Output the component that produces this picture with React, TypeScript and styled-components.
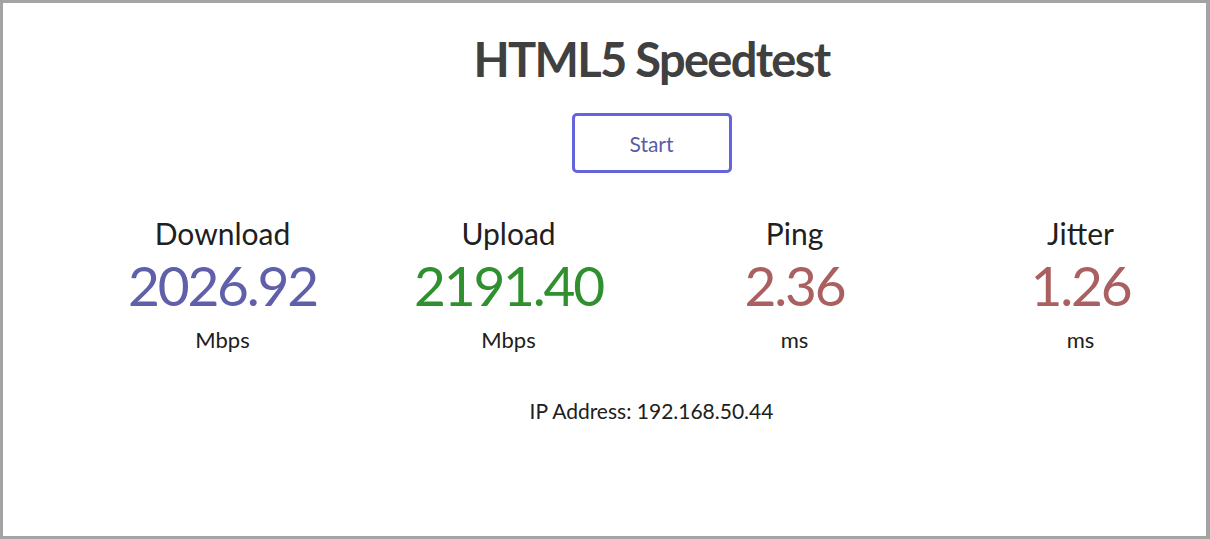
import React from "react";
import styled, { createGlobalStyle } from "styled-components";

const Global = createGlobalStyle`
  html, body { margin: 0; padding: 0; background: #ffffff; }
  body { font-family: "Lato", "Open Sans", sans-serif; }
`;

const Frame = styled.div`
  box-sizing: border-box;
  width: 1210px;
  height: 539px;
  border: 3px solid #a3a3a3;
  border-right-width: 4px;
  background: #ffffff;
  overflow: hidden;
`;

const Content = styled.main`
  display: flex;
  flex-direction: column;
  align-items: center;
  padding-left: 94px;
  text-align: center;
`;

const Title = styled.h1`
  margin: 26px 0 0;
  font-size: 47px;
  line-height: 60px;
  font-weight: 700;
  letter-spacing: -1.7px;
  color: #404040;
`;

const StartButton = styled.button`
  box-sizing: border-box;
  margin-top: 24px;
  width: 160px;
  height: 60px;
  border: 3px solid #6464dc;
  border-radius: 5px;
  background: #ffffff;
  color: #5c5ca6;
  font-family: "Lato", "Open Sans", sans-serif;
  font-size: 21px;
  cursor: pointer;
`;

const Meters = styled.div`
  display: grid;
  grid-template-columns: repeat(4, 200px);
  column-gap: 86px;
  margin-top: 42px;
`;

const Meter = styled.div`
  display: flex;
  flex-direction: column;
  align-items: center;
`;

const TestName = styled.div`
  font-size: 30px;
  line-height: 36px;
  color: #202020;
`;

const MeterValue = styled.div<{ $color: string }>`
  margin-top: 4px;
  font-size: 55px;
  line-height: 60px;
  letter-spacing: -2.2px;
  color: ${(p) => p.$color};
`;

const Unit = styled.div`
  margin-top: 11px;
  font-size: 22px;
  line-height: 28px;
  color: #202020;
`;

const IpLine = styled.div`
  margin-top: 44px;
  font-size: 21px;
  line-height: 26px;
  color: #202020;
`;

const meters = [
  { name: "Download", value: "2026.92", unit: "Mbps", color: "#6060aa" },
  { name: "Upload", value: "2191.40", unit: "Mbps", color: "#309030" },
  { name: "Ping", value: "2.36", unit: "ms", color: "#aa6060" },
  { name: "Jitter", value: "1.26", unit: "ms", color: "#aa6060" },
];

export default function App() {
  return (
    <>
      <Global />
      <Frame>
        <Content>
          <Title>HTML5 Speedtest</Title>
          <StartButton>Start</StartButton>
          <Meters>
            {meters.map((m) => (
              <Meter key={m.name}>
                <TestName>{m.name}</TestName>
                <MeterValue $color={m.color}>{m.value}</MeterValue>
                <Unit>{m.unit}</Unit>
              </Meter>
            ))}
          </Meters>
          <IpLine>IP Address: 192.168.50.44</IpLine>
        </Content>
      </Frame>
    </>
  );
}
